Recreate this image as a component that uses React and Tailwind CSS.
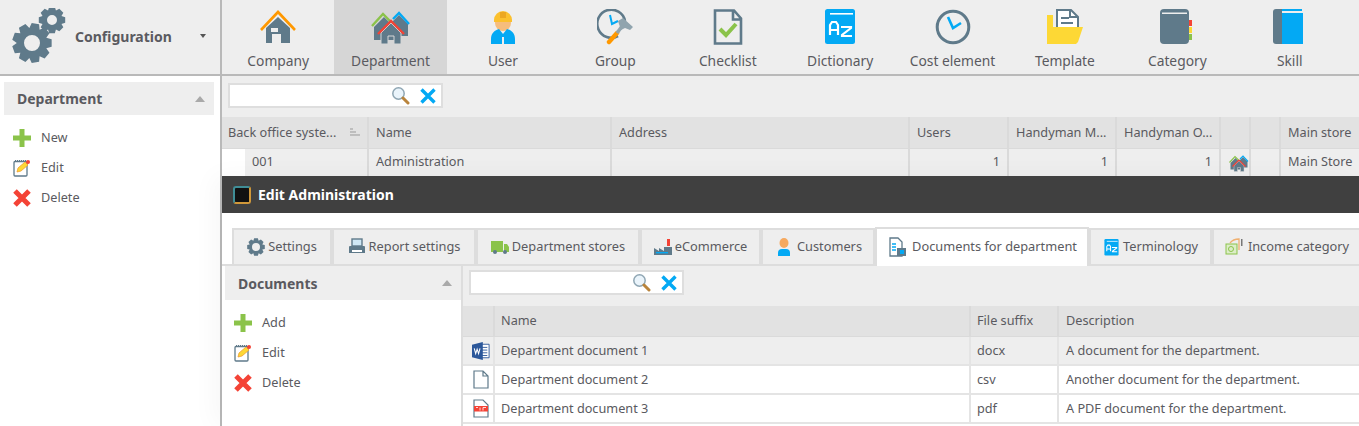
import React from 'react';

const SLATE = '#5f7a8a';
const BLUE = '#03a9f4';

const gearPath = (cx, cy, r, hole, teeth) => {
  const pts = [];
  const step = (Math.PI * 2) / teeth;
  for (let i = 0; i < teeth; i++) {
    const a = i * step;
    const inner = r * 0.76;
    [[-0.5, inner], [-0.27, r], [0.27, r], [0.5, inner]].forEach(([o, rad]) => {
      const t = a + o * step;
      pts.push(`${(cx + Math.cos(t) * rad).toFixed(2)} ${(cy + Math.sin(t) * rad).toFixed(2)}`);
    });
  }
  const ring = `M${cx - hole} ${cy}a${hole} ${hole} 0 1 0 ${hole * 2} 0a${hole} ${hole} 0 1 0 ${-hole * 2} 0Z`;
  return `M${pts.join('L')}Z${ring}`;
};

const Gears = () => (
  <svg width="56" height="56" viewBox="0 0 56 56">
    <path fill={SLATE} fillRule="evenodd" d={gearPath(20, 35, 20, 8, 9)} />
    <path fill={SLATE} fillRule="evenodd" d={gearPath(40, 12, 13.5, 5, 8)} />
  </svg>
);

const Company = () => (
  <svg width="36" height="36" viewBox="0 0 36 36">
    <path fill={SLATE} d="M6 19 18 8l12 11v15h-9v-9h-9v9H6Z" />
    <rect x="11" y="19" width="7" height="4" fill="#eee" />
    <path fill="none" stroke="#ff9800" strokeWidth="2.6" d="M1 21 18 3l17 18" />
  </svg>
);

const Houses = ({ size = 40 }) => (
  <svg width={size} height={size} viewBox="0 0 40 36">
    <path fill={SLATE} d="M3 18 13 8l10 10v13H3Z" />
    <path fill={SLATE} d="M20 14l8-8 9 9v12H20Z" />
    <path fill="none" stroke="#8bc34a" strokeWidth="2.4" d="M1 17 12 5l9 9" />
    <path fill="none" stroke={BLUE} strokeWidth="2.4" d="M22 10l6-6 10 11" />
    <path fill={SLATE} stroke="#d6d6d6" strokeWidth="1" d="M10 24 20 14l10 10v11h-7v-8h-6v8h-7Z" />
    <path fill="none" stroke="#f44336" strokeWidth="2.4" d="M7 25 20 12l13 13" />
  </svg>
);

const Worker = () => (
  <svg width="36" height="36" viewBox="0 0 36 36">
    <circle cx="18" cy="14" r="8" fill="#f6bd7d" />
    <path fill="#fbc02d" d="M9 11a9 9 0 0 1 18 0v2H9Z" />
    <path fill="#e69d1c" d="M15 3h6v6h-6Z" opacity=".7" />
    <path fill={BLUE} d="M6 35v-5c0-6 4-9 8-10l4 5 4-5c4 1 8 4 8 10v5H19v-7h-2v7Z" />
  </svg>
);

const ClockHammer = () => (
  <svg width="36" height="36" viewBox="0 0 36 36">
    <path fill="none" stroke={SLATE} strokeWidth="2.6" d="M21 27A14 14 0 1 1 28 12" />
    <path fill="none" stroke={BLUE} strokeWidth="2" d="M13 6l2 9 6-3" />
    <path fill="none" stroke="#ff9800" strokeWidth="4.4" strokeLinecap="round" d="M12 33l8-9" />
    <path fill="none" stroke="#90a4ae" strokeWidth="3.6" d="M20 24l6-8" />
    <path fill="#90a4ae" d="M21 12l5-3 10 9-3 3-5-2-4 2Z" />
  </svg>
);

const Checklist = () => (
  <svg width="36" height="36" viewBox="0 0 36 36">
    <path fill="none" stroke={SLATE} strokeWidth="2.6" d="M5 1.5h19l7 8v25H5ZM23 1.5v9h8" />
    <path fill="none" stroke="#8bc34a" strokeWidth="4" d="M10 20l6 6 10-11" />
  </svg>
);

const Dictionary = ({ size = 36 }) => (
  <svg width={size} height={size} viewBox="0 0 36 36">
    <rect x="3" y="0" width="30" height="35" rx="2.5" fill={BLUE} />
    <rect x="8" y="4" width="23" height="1.6" fill="#fff" />
    <path fill="none" stroke="#fff" strokeWidth="2.2" d="M8 26V16l2-3h4l2 3v10M8 21h8M19 18h10v1l-9 7v1h10" />
  </svg>
);

const Clock = () => (
  <svg width="36" height="36" viewBox="0 0 36 36">
    <circle cx="18" cy="18" r="15.8" fill="none" stroke={SLATE} strokeWidth="3" />
    <path fill="none" stroke={BLUE} strokeWidth="2.6" d="M13 8l5 11 8-5" />
  </svg>
);

const Template = () => (
  <svg width="38" height="36" viewBox="0 0 38 36">
    <path fill="#fdd835" d="M1 6h6v22H1Z" />
    <path fill="#fff" stroke={SLATE} strokeWidth="2" d="M11 1h14l7 7v14H11Z" />
    <path fill="none" stroke={SLATE} strokeWidth="2" d="M15 9h8M15 14h12M24 1v7h8" />
    <path fill="#fdd835" d="M1 35V18h36l-5 15-2 2Z" />
  </svg>
);

const Category = () => (
  <svg width="36" height="36" viewBox="0 0 36 36">
    <rect x="1" y="0" width="29" height="35" rx="4" fill={SLATE} />
    <rect x="3" y="3.5" width="25" height="1.5" fill="#eee" />
    <rect x="30" y="11" width="3" height="6" fill="#f44336" />
    <rect x="30" y="18" width="3" height="6" fill="#fdd835" />
    <rect x="30" y="25" width="3" height="6" fill="#8bc34a" />
  </svg>
);

const Skill = () => (
  <svg width="36" height="36" viewBox="0 0 36 36">
    <path fill={SLATE} d="M4 0h6v35H4q-3 0-3-3V3q0-3 3-3Z" />
    <path fill={BLUE} d="M10 4h21v31H10Z" />
    <path fill={BLUE} d="M10 0h20v2H10Z" />
  </svg>
);

const Plus = () => (
  <svg width="18" height="18" viewBox="0 0 18 18">
    <path fill="#8bc34a" d="M6.5 0h5v6.5H18v5h-6.5V18h-5v-6.5H0v-5h6.5Z" />
  </svg>
);

const EditIcon = () => (
  <svg width="18" height="18" viewBox="0 0 18 18">
    <rect x="1" y="2.5" width="13" height="14.5" rx="1" fill="#fff" stroke={SLATE} strokeWidth="1.3" />
    <path stroke={SLATE} strokeWidth="1" strokeDasharray="1 1" d="M2 1.5h11" />
    <path fill="#fdd835" stroke="#f0a030" strokeWidth=".8" d="M5 9 12 3l3 3-7 6-4 1Z" />
    <circle cx="15" cy="3" r="2" fill="#f44336" />
  </svg>
);

const Cross = () => (
  <svg width="18" height="18" viewBox="0 0 18 18">
    <path fill="none" stroke="#f44336" strokeWidth="5" d="M2 2l14 14M16 2 2 16" />
  </svg>
);

const Magnifier = () => (
  <svg width="19" height="19" viewBox="0 0 19 19">
    <circle cx="7.5" cy="7.5" r="5.7" fill="#eaf4fb" stroke="#8fa6b3" strokeWidth="1.5" />
    <path stroke="#b9843c" strokeWidth="3" strokeLinecap="round" d="M12 12l5 5" />
  </svg>
);

const BlueCross = () => (
  <svg width="16" height="16" viewBox="0 0 16 16">
    <path fill="none" stroke={BLUE} strokeWidth="3.4" d="M1.5 1.5l13 13M14.5 1.5l-13 13" />
  </svg>
);

const SearchBox = () => (
  <div className="flex h-[25px] w-[215px] items-center justify-end gap-[10px] border-2 border-[#dedede] bg-white pr-[5px]">
    <Magnifier />
    <BlueCross />
  </div>
);

const SmallGear = () => (
  <svg width="18" height="18" viewBox="0 0 18 18">
    <path fill={SLATE} fillRule="evenodd" d={gearPath(9, 9, 9, 4, 8)} />
  </svg>
);

const Printer = () => (
  <svg width="18" height="18" viewBox="0 0 18 18">
    <rect x="4" y="1" width="10" height="7" fill="#cfe8f5" stroke={SLATE} strokeWidth="1.4" />
    <path fill={SLATE} d="M1 9q0-1 1-1h14q1 0 1 1v6H1Z" />
    <rect x="4" y="12" width="10" height="2" fill="#fff" />
  </svg>
);

const Truck = () => (
  <svg width="18" height="18" viewBox="0 0 18 18">
    <path fill="#8bc34a" d="M0 3h12v11H0ZM13 6h3l2 3v5h-5Z" />
    <circle cx="4" cy="14" r="2" fill={SLATE} />
    <circle cx="14" cy="14" r="2" fill={SLATE} />
  </svg>
);

const Factory = () => (
  <svg width="18" height="18" viewBox="0 0 18 18">
    <path fill={SLATE} d="M0 17v-7l5 3v-3l5 3V9h8v8Z" />
    <rect x="13" y="1" width="3" height="7" fill="#f44336" />
    <rect x="2" y="14" width="12" height="1.4" fill={BLUE} />
  </svg>
);

const Person = () => (
  <svg width="20" height="18" viewBox="0 0 16 18" preserveAspectRatio="xMidYMid meet">
    <ellipse cx="8" cy="5" rx="4.5" ry="5" fill="#f6a95f" />
    <path fill={BLUE} d="M2 18v-3q0-4 4-4h4q4 0 4 4v3Z" />
  </svg>
);

const Docs = () => (
  <svg width="22" height="20" viewBox="0 0 18 20" preserveAspectRatio="xMidYMid meet">
    <path fill="#fff" stroke={SLATE} strokeWidth="1.3" d="M1 1h8l4 4v14H1Z" />
    <path stroke={BLUE} strokeWidth="1.5" d="M3 7h4M3 10h4M3 13h4" />
    <rect x="8" y="11" width="9" height="8" fill={SLATE} />
    <rect x="11" y="13" width="4" height="4" fill={BLUE} />
  </svg>
);

const Income = () => (
  <svg width="20" height="18" viewBox="0 0 20 18">
    <rect x="1" y="6" width="11" height="10" fill="#dcedc8" stroke="#8bc34a" />
    <circle cx="6" cy="11" r="2.5" fill="none" stroke="#8bc34a" />
    <path fill="none" stroke="#f0b070" strokeWidth="1.3" d="M5 5q3-4 9-4v11" />
    <rect x="16" y="1" width="1.5" height="7" fill="#777" />
  </svg>
);

const WordIcon = () => (
  <svg width="18" height="18" viewBox="0 0 20 20">
    <path fill="#fff" stroke="#2b579a" d="M8 2.5h11v15H8Z" />
    <path stroke="#2b579a" d="M11 6h6M11 9h6M11 12h6M11 15h6" />
    <path fill="#2b579a" d="M0 3l12-3v20L0 17Z" />
    <path fill="none" stroke="#fff" strokeWidth="1.2" d="M2.5 7l1.6 6 1.6-5 1.6 5 1.6-6" />
  </svg>
);

const FileIcon = () => (
  <svg width="16" height="19" viewBox="0 0 16 19">
    <path fill="#fff" stroke={SLATE} strokeWidth="1.2" d="M1 1h9l5 5v12H1ZM10 1v5h5" />
  </svg>
);

const PdfIcon = () => (
  <svg width="16" height="19" viewBox="0 0 16 19">
    <path fill="#fff" stroke={SLATE} strokeWidth="1.2" d="M1 1h9l5 5v12H1Z" />
    <rect x="1" y="7" width="14" height="5.5" fill="#f44336" />
    <path stroke="#fff" strokeWidth=".8" d="M3 8.5h2M7 8.5v3M10 8.5h3M10 8.5v3" />
  </svg>
);

const ribbon = [
  { label: 'Company', icon: <Company /> },
  { label: 'Department', icon: <Houses />, active: true },
  { label: 'User', icon: <Worker /> },
  { label: 'Group', icon: <ClockHammer /> },
  { label: 'Checklist', icon: <Checklist /> },
  { label: 'Dictionary', icon: <Dictionary /> },
  { label: 'Cost element', icon: <Clock /> },
  { label: 'Template', icon: <Template /> },
  { label: 'Category', icon: <Category /> },
  { label: 'Skill', icon: <Skill /> },
];

const tabs = [
  { label: 'Settings', icon: <SmallGear />, w: 'w-[100px]' },
  { label: 'Report settings', icon: <Printer />, w: 'w-[144px]' },
  { label: 'Department stores', icon: <Truck />, w: 'w-[164px]' },
  { label: 'eCommerce', icon: <Factory />, w: 'w-[121px]' },
  { label: 'Customers', icon: <Person />, w: 'w-[114px]' },
  { label: 'Documents for department', icon: <Docs />, w: 'w-[214px]', active: true },
  { label: 'Terminology', icon: <Dictionary size={17} />, w: 'w-[123px]' },
  { label: 'Income category', icon: <Income />, w: 'w-[150px]' },
];

const deptCols = [
  { w: 'w-[147px]' },
  { w: 'w-[243px]' },
  { w: 'w-[298px]' },
  { w: 'w-[99px]' },
  { w: 'w-[108px]' },
  { w: 'w-[104px]' },
  { w: 'w-[30px]' },
  { w: 'w-[30px]' },
  { w: 'flex-1' },
];

const docRows = [
  { icon: <WordIcon />, name: 'Department document 1', suffix: 'docx', desc: 'A document for the department.', bg: 'bg-[#eeeeee]' },
  { icon: <FileIcon />, name: 'Department document 2', suffix: 'csv', desc: 'Another document for the department.', bg: 'bg-white' },
  { icon: <PdfIcon />, name: 'Department document 3', suffix: 'pdf', desc: 'A PDF document for the department.', bg: 'bg-white' },
];

const ActionList = ({ items }) => (
  <ul className="flex flex-col gap-[12px] pl-[9px] pt-[14px]">
    {items.map((item) => (
      <li key={item.label} className="flex h-[18px] items-center gap-[10px] text-[12.7px]">
        <span className="flex w-[18px] justify-center">{item.icon}</span>
        {item.label}
      </li>
    ))}
  </ul>
);

const PanelHeader = ({ title }) => (
  <div className="flex items-center justify-between bg-[#eeeeee] pl-[13px] pr-[9px] text-[14px] font-bold">
    {title}
    <span className="h-0 w-0 border-x-[5px] border-b-[6px] border-x-transparent border-b-[#a9a9a9]" />
  </div>
);

export default function App() {
  return (
    <div className="flex h-[426px] w-[1359px] flex-col overflow-hidden bg-white font-['Noto_Sans',sans-serif] text-[#5a5a60]">
      <header className="flex h-[76px] border-b-2 border-[#b9b9b9] bg-[#eeeeee]">
        <div className="flex w-[222px] items-center border-r-2 border-[#b9b9b9] pb-[2px] pl-[12px]">
          <Gears />
          <span className="ml-[7px] text-[14px] font-bold">Configuration</span>
          <span className="ml-[28px] h-0 w-0 border-x-[3.5px] border-t-[4px] border-x-transparent border-t-[#555]" />
        </div>
        <nav className="flex flex-1">
          {ribbon.map((item) => (
            <div
              key={item.label}
              className={`flex w-[112.4px] flex-col items-center pt-[9px] ${item.active ? 'bg-[#d6d6d6]' : ''}`}
            >
              <div className="flex h-[36px] items-center justify-center">{item.icon}</div>
              <span className="mt-[6px] text-[13.8px] leading-[20px]">{item.label}</span>
            </div>
          ))}
        </nav>
      </header>

      <div className="flex min-h-0 flex-1">
        <aside className="w-[222px] border-r-2 border-[#b9b9b9] bg-white px-[4px] pt-[6px]">
          <div className="w-[210px] [&>div]:h-[33px]">
            <PanelHeader title="Department" />
          </div>
          <ActionList
            items={[
              { label: 'New', icon: <Plus /> },
              { label: 'Edit', icon: <EditIcon /> },
              { label: 'Delete', icon: <Cross /> },
            ]}
          />
        </aside>

        <main className="flex min-w-0 flex-1 flex-col bg-[#eeeeee]">
          <div className="h-[41px] pl-[6px] pt-[7px]">
            <SearchBox />
          </div>
          <div className="flex h-[32px] border-b border-[#dadada] bg-[#e2e2e2] text-[12.7px]">
            <div className={`flex items-center justify-between border-r-2 border-[#dadada] pl-[6px] pr-[6px] ${deptCols[0].w}`}>
              Back office syste...
              <svg width="11" height="9" viewBox="0 0 11 9"><path stroke="#999" d="M0 1h3M0 4h6M0 7h10" /></svg>
            </div>
            {['Name', 'Address', 'Users', 'Handyman M...', 'Handyman O...', '', '', 'Main store'].map((h, i) => (
              <div key={i} className={`flex items-center border-r-2 border-[#dadada] pl-[7px] last:border-r-0 ${deptCols[i + 1].w}`}>
                {h}
              </div>
            ))}
          </div>
          <div className="flex h-[27px] shrink-0 text-[12.7px]">
            <div className={`flex ${deptCols[0].w}`}>
              <span className="h-full w-[23px] bg-white" />
              <span className="flex h-full flex-1 items-center border-r-2 border-[#dadada] pb-[2px] pl-[7px]">001</span>
            </div>
            <div className={`flex items-center border-r-2 border-[#dadada] pb-[2px] pl-[7px] ${deptCols[1].w}`}>Administration</div>
            <div className={`border-r-2 border-[#dadada] ${deptCols[2].w}`} />
            {['1', '1', '1'].map((v, i) => (
              <div key={i} className={`flex items-center justify-end border-r-2 border-[#dadada] pb-[2px] pr-[7px] ${deptCols[i + 3].w}`}>{v}</div>
            ))}
            <div className={`flex items-center justify-center border-r-2 border-[#dadada] pl-[8px] ${deptCols[6].w}`}><Houses size={20} /></div>
            <div className={`border-r-2 border-[#dadada] ${deptCols[7].w}`} />
            <div className={`flex items-center pb-[2px] pl-[7px] ${deptCols[8].w}`}>Main Store</div>
          </div>

          <section className="relative z-10 flex min-h-0 flex-1 flex-col bg-white shadow-[-8px_0_24px_rgba(0,0,0,0.035)]">
            <div className="flex h-[37px] shrink-0 items-center gap-[7px] bg-[#404040] pl-[11px] text-[14px] font-bold text-white">
              <span className="h-[18px] w-[18px] rounded-[3px] border-2 border-[#3f8d96] border-b-[#d0983a] border-r-[#d0983a] bg-[#111]" />
              Edit Administration
            </div>
            <div className="flex h-[53px] shrink-0 items-end border-b-2 border-[#dddddd] pl-[10px] text-[12.8px]">
              {tabs.map((tab) => (
                <div
                  key={tab.label}
                  className={`flex shrink-0 items-center justify-center gap-[3px] whitespace-nowrap border-2 border-b-0 border-[#dddddd] ${tab.w} ${
                    tab.active ? '-mb-[2px] h-[39px] bg-white pb-[2px]' : 'h-[36px] bg-[#eeeeee]'
                  }`}
                >
                  {tab.icon}
                  {tab.label}
                </div>
              ))}
            </div>
            <div className="flex min-h-0 flex-1">
              <div className="w-[241px] shrink-0 border-r-2 border-[#dddddd] pl-[3px]">
                <div className="w-[236px] [&>div]:h-[34px]">
                  <PanelHeader title="Documents" />
                </div>
                <ActionList
                  items={[
                    { label: 'Add', icon: <Plus /> },
                    { label: 'Edit', icon: <EditIcon /> },
                    { label: 'Delete', icon: <Cross /> },
                  ]}
                />
              </div>
              <div className="flex min-w-0 flex-1 flex-col bg-white text-[12.7px]">
                <div className="h-[40px] shrink-0 bg-[#eeeeee] pl-[6px] pt-[4px]">
                  <SearchBox />
                </div>
                <div className="flex h-[31px] shrink-0 border-b border-[#dadada] bg-[#e2e2e2]">
                  <div className="w-[32px] border-r-2 border-[#dadada]" />
                  <div className="flex w-[476px] items-center border-r-2 border-[#dadada] pl-[6px]">Name</div>
                  <div className="flex w-[88px] items-center border-r-2 border-[#dadada] pl-[6px]">File suffix</div>
                  <div className="flex flex-1 items-center pl-[7px]">Description</div>
                </div>
                {docRows.map((row) => (
                  <div key={row.name} className={`flex h-[29px] shrink-0 border-b-2 border-[#e4e4e4] ${row.bg}`}>
                    <div className="flex w-[32px] items-center justify-center border-r-2 border-[#e4e4e4] pl-[5px]">{row.icon}</div>
                    <div className="flex w-[476px] items-center border-r-2 border-[#e4e4e4] pl-[6px]">{row.name}</div>
                    <div className="flex w-[88px] items-center border-r-2 border-[#e4e4e4] pl-[6px]">{row.suffix}</div>
                    <div className="flex flex-1 items-center pl-[7px]">{row.desc}</div>
                  </div>
                ))}
              </div>
            </div>
          </section>
        </main>
      </div>
    </div>
  );
}
